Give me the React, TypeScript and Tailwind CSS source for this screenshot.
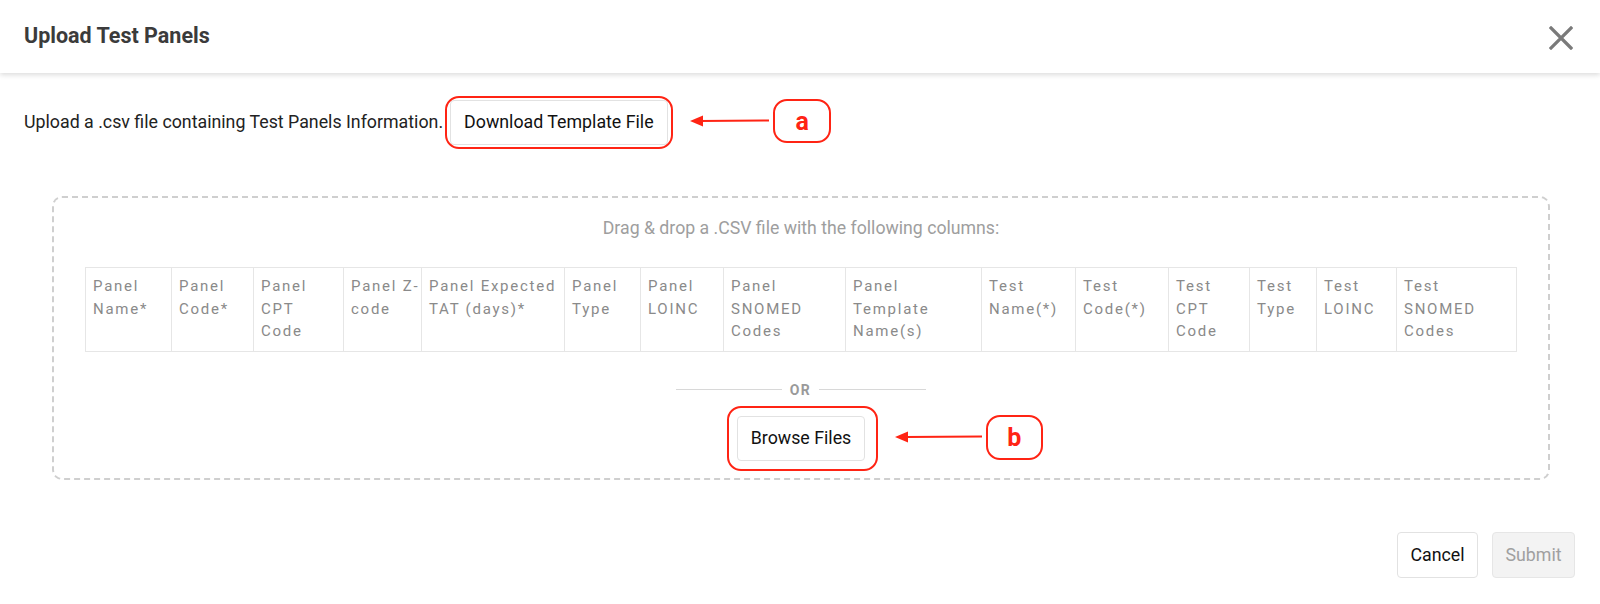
import React from 'react';

const columns: { label: string; w: string }[] = [
  { label: 'Panel Name*', w: 'w-[86px] pr-[7px]' },
  { label: 'Panel Code*', w: 'w-[82px] pr-[7px]' },
  { label: 'Panel CPT Code', w: 'w-[90px] pr-[7px]' },
  { label: 'Panel Z-code', w: 'w-[78px] pr-0 tracking-[1.4px]' },
  { label: 'Panel Expected TAT (days)*', w: 'w-[143px] pr-[7px]' },
  { label: 'Panel Type', w: 'w-[76px] pr-[7px]' },
  { label: 'Panel LOINC', w: 'w-[83px] pr-[7px]' },
  { label: 'Panel SNOMED Codes', w: 'w-[122px] pr-[7px]' },
  { label: 'Panel Template Name(s)', w: 'w-[136px] pr-[7px]' },
  { label: 'Test Name(*)', w: 'w-[94px] pr-[7px]' },
  { label: 'Test Code(*)', w: 'w-[93px] pr-[7px]' },
  { label: 'Test CPT Code', w: 'w-[81px] pr-[7px]' },
  { label: 'Test Type', w: 'w-[67px] pr-[7px]' },
  { label: 'Test LOINC', w: 'w-[80px] pr-[7px]' },
  { label: 'Test SNOMED Codes', w: 'w-[120px] pr-[7px]' },
];

// annotation: arrow pointing left + letter badge
const Callout: React.FC<{ letter: string; arrow: number; className: string; badge: string }> = ({ letter, arrow, className, badge }) => (
  <div className={`absolute flex items-center ${className}`}>
    <svg width={arrow} height="14" viewBox={`0 0 ${arrow} 14`} className="block">
      <line x1="10" y1="7" x2={arrow - 4} y2="6.5" stroke="#ff2414" strokeWidth="2" />
      <polygon points="0,7 13,1.5 13,12.5" fill="#ff2414" />
    </svg>
    <div className={`flex items-center justify-center rounded-[14px] border-[2.5px] border-[#ff2414] text-[25px] font-bold leading-none text-[#ff2414] ${badge}`}>
      {letter}
    </div>
  </div>
);

const App: React.FC = () => {
  return (
    <div className="relative h-[604px] w-[1600px] overflow-hidden bg-white font-['Roboto',sans-serif] text-[#222]">
      {/* Header */}
      <div className="relative z-10 flex h-[73px] items-center justify-between bg-white pl-[24px] pr-[27px] shadow-[0_2px_5px_rgba(0,0,0,0.14)]">
        <h1 className="text-[21.5px] font-bold text-[#3b3b3b]">Upload Test Panels</h1>
        <svg width="24" height="24" viewBox="0 0 24 24" className="mt-[2px]">
          <path d="M2 2 L22 22 M22 2 L2 22" stroke="#7a7a7a" strokeWidth="3.2" strokeLinecap="square" />
        </svg>
      </div>

      {/* Body */}
      <div className="px-[24px] pt-[27px]">
        <div className="flex items-center text-[17.8px]">
          <span className="text-[#222]">Upload a .csv file containing Test Panels Information.</span>
          <div className="relative ml-[7px]">
            <button className="h-[45px] rounded-[4px] border border-[#e2e2e2] bg-white px-[13px] text-[17.8px] text-[#111]">
              Download Template File
            </button>
            <div className="pointer-events-none absolute -bottom-[4px] -left-[5px] -right-[5px] -top-[4px] rounded-[14px] border-[2.5px] border-[#ff2414]" />
            <Callout letter="a" arrow={83} badge="h-[44px] w-[58px]" className="left-[240px] top-[-1px]" />
          </div>
        </div>

        {/* Drop zone */}
        <div className="mr-[26px] ml-[28px] mt-[51px] flex h-[284px] flex-col items-center rounded-[10px] border-2 border-dashed border-[#cfcfcf] px-[31px] pt-[17px]">
          <p className="text-[17.7px] leading-[26px] text-[#9e9e9e]">Drag &amp; drop a .CSV file with the following columns:</p>

          <table className="mt-[26px] w-full table-fixed border-collapse">
            <thead>
              <tr>
                {columns.map((c) => (
                  <th
                    key={c.label}
                    className={`h-[83px] border border-[#e6e6e6] pl-[7px] pt-[7px] pb-[8px] text-left align-top text-[15px] font-normal leading-[22.5px] tracking-[1.75px] text-[#8a8a8a] ${c.w}`}
                  >
                    {c.label}
                  </th>
                ))}
              </tr>
            </thead>
          </table>

          <div className="mt-[30px] flex items-center gap-[8px]">
            <div className="h-px w-[106px] bg-[#d8d8d8]" />
            <span className="text-[14px] font-bold leading-[16px] tracking-[1.5px] text-[#9a9a9a]">OR</span>
            <div className="h-px w-[107px] bg-[#d8d8d8]" />
          </div>

          <div className="relative mt-[18px]">
            <button className="h-[45px] rounded-[4px] border border-[#e2e2e2] bg-white px-[13px] text-[17.8px] text-[#111]">
              Browse Files
            </button>
            <div className="pointer-events-none absolute -bottom-[10px] -left-[10px] -right-[13px] -top-[10px] rounded-[14px] border-[2.5px] border-[#ff2414]" />
            <Callout letter="b" arrow={91} badge="h-[45px] w-[57px]" className="left-[158px] top-[-1px]" />
          </div>
        </div>

        {/* Footer */}
        <div className="mt-[52px] flex justify-end gap-[14px] pr-[1px]">
          <button className="h-[46px] w-[81px] rounded-[4px] border border-[#e2e2e2] bg-white text-[17.8px] text-[#111]">Cancel</button>
          <button className="h-[46px] w-[83px] rounded-[4px] border border-[#e6e6e6] bg-[#f3f3f3] text-[17.8px] text-[#a0a0a0]">Submit</button>
        </div>
      </div>
    </div>
  );
};

export default App;
